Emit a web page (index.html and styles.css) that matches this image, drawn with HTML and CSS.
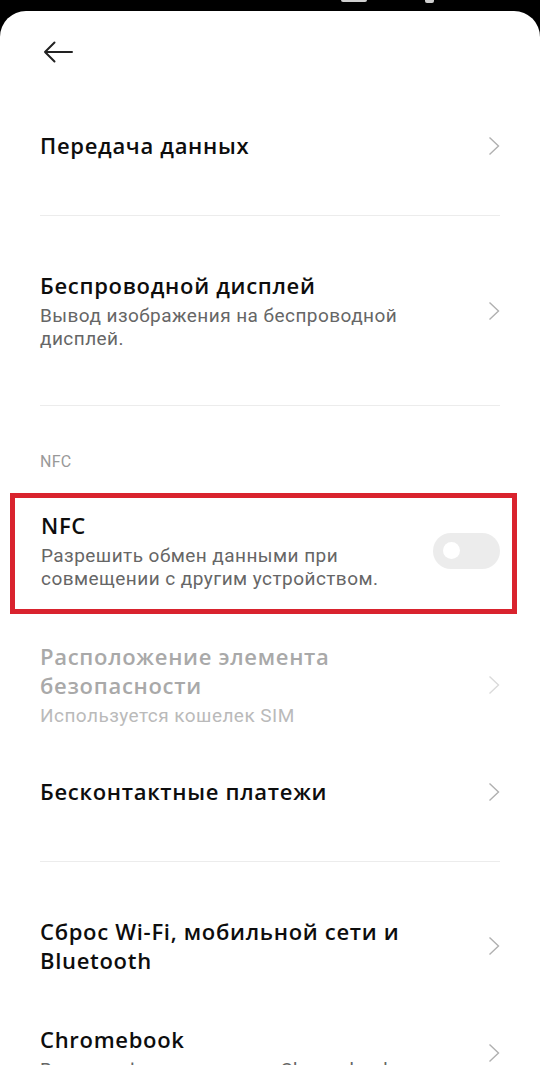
FILE: index.html
```html
<!DOCTYPE html>
<html lang="ru">
<head>
    <meta charset="UTF-8">
    <title>Подключение и общий доступ</title>
    <link rel="stylesheet" href="styles.css">
</head>
<body>
<div class="statusbar">
    <span class="status-bit wide"></span>
    <span class="status-bit small"></span>
</div>
<div class="panel">
    <div class="topbar">
        <button class="back" aria-label="Назад">
            <svg width="30" height="22" viewBox="0 0 30 22">
                <path d="M29 11H2M11.5 1.5L2 11l9.5 9.5" fill="none" stroke="#222" stroke-width="2" stroke-linecap="round" stroke-linejoin="round"/>
            </svg>
        </button>
    </div>

    <ul class="settings-list">
        <li class="item">
            <div class="item-text">
                <div class="item-title">Передача данных</div>
            </div>
            <span class="chevron"></span>
        </li>
        <li class="divider"></li>
        <li class="item">
            <div class="item-text">
                <div class="item-title">Беспроводной дисплей</div>
                <div class="item-sub">Вывод изображения на беспроводной дисплей.</div>
            </div>
            <span class="chevron"></span>
        </li>
        <li class="divider"></li>
        <li class="section-label">NFC</li>
        <li class="item highlighted">
            <div class="item-text">
                <div class="item-title">NFC</div>
                <div class="item-sub">Разрешить обмен данными при совмещении с другим устройством.</div>
            </div>
            <span class="switch"><span class="knob"></span></span>
        </li>
        <li class="item disabled">
            <div class="item-text">
                <div class="item-title">Расположение элемента безопасности</div>
                <div class="item-sub">Используется кошелек SIM</div>
            </div>
            <span class="chevron"></span>
        </li>
        <li class="item">
            <div class="item-text">
                <div class="item-title">Бесконтактные платежи</div>
            </div>
            <span class="chevron"></span>
        </li>
        <li class="divider"></li>
        <li class="item">
            <div class="item-text">
                <div class="item-title">Сброс Wi-Fi, мобильной сети и Bluetooth</div>
            </div>
            <span class="chevron"></span>
        </li>
        <li class="item">
            <div class="item-text">
                <div class="item-title">Chromebook</div>
                <div class="item-sub">Ваш телефон не связан с Chromebook</div>
            </div>
            <span class="chevron"></span>
        </li>
    </ul>
</div>
</body>
</html>
```

FILE: styles.css
```css
body {
    margin: 0;
    padding: 0;
    background-color: #000;
    font-family: Roboto, "Noto Sans", Arial, sans-serif;
    overflow: hidden;
}
.statusbar {
    height: 11px;
    display: flex;
    align-items: flex-start;
}
.status-bit {
    display: block;
    background: #cfcfcf;
    border-radius: 0 0 2px 2px;
}
.status-bit.wide {
    width: 26px;
    height: 2px;
    margin-left: 341px;
}
.status-bit.small {
    width: 9px;
    height: 3px;
    margin-left: 58px;
}
.panel {
    background: #fff;
    border-radius: 26px 26px 0 0;
    min-height: 1100px;
}
.topbar {
    height: 95px;
    box-sizing: border-box;
    padding: 30px 0 0 43px;
}
.back {
    display: block;
    padding: 0;
    border: none;
    background: none;
    width: 30px;
    height: 22px;
}
.back svg {
    display: block;
}
.settings-list {
    list-style: none;
    margin: 0;
    padding: 0;
}
.item {
    display: flex;
    align-items: center;
    padding: 25px 40px;
}
.item-text {
    flex: 1;
    min-width: 0;
}
.item-title {
    font-family: "Open Sans", Roboto, sans-serif;
    font-size: 22px;
    line-height: 29px;
    font-weight: 600;
    letter-spacing: 0.7px;
    color: #0d0d0d;
}
.item-sub {
    margin-top: 4px;
    font-size: 19px;
    line-height: 23px;
    letter-spacing: 0.45px;
    color: #666;
    padding-right: 10px;
}
.chevron {
    flex: none;
    width: 12px;
    height: 20px;
    margin-left: 28px;
    background: no-repeat center / 12px 20px url("data:image/svg+xml,%3Csvg xmlns='http://www.w3.org/2000/svg' width='12' height='20' viewBox='0 0 12 20'%3E%3Cpath d='M1.5 1.5L10.5 10L1.5 18.5' fill='none' stroke='%23b0b0b0' stroke-width='1.4'/%3E%3C/svg%3E");
}
.disabled .item-title {
    color: #a9a9a9;
}
.disabled .item-sub {
    color: #bababa;
}
.disabled .chevron {
    background-image: url("data:image/svg+xml,%3Csvg xmlns='http://www.w3.org/2000/svg' width='12' height='20' viewBox='0 0 12 20'%3E%3Cpath d='M1.5 1.5L10.5 10L1.5 18.5' fill='none' stroke='%23dadada' stroke-width='1.4'/%3E%3C/svg%3E");
}
.divider {
    height: 1px;
    margin: 30px 40px;
    background: #ececec;
}
.section-label {
    padding: 16px 40px 21px;
    font-size: 16px;
    line-height: 20px;
    letter-spacing: 0.3px;
    color: #999;
}
.highlighted {
    margin: 0 23px 3px 10px;
    padding: 13px 12px 19px 26px;
    border: 5px solid #d9232e;
}
.highlighted .item-sub {
    padding-right: 20px;
}
.switch {
    flex: none;
    display: flex;
    align-items: center;
    width: 67px;
    height: 36px;
    border-radius: 18px;
    background: #ececec;
    box-sizing: border-box;
    padding-left: 10px;
}
.knob {
    width: 17px;
    height: 17px;
    border-radius: 50%;
    background: #fff;
}
```
